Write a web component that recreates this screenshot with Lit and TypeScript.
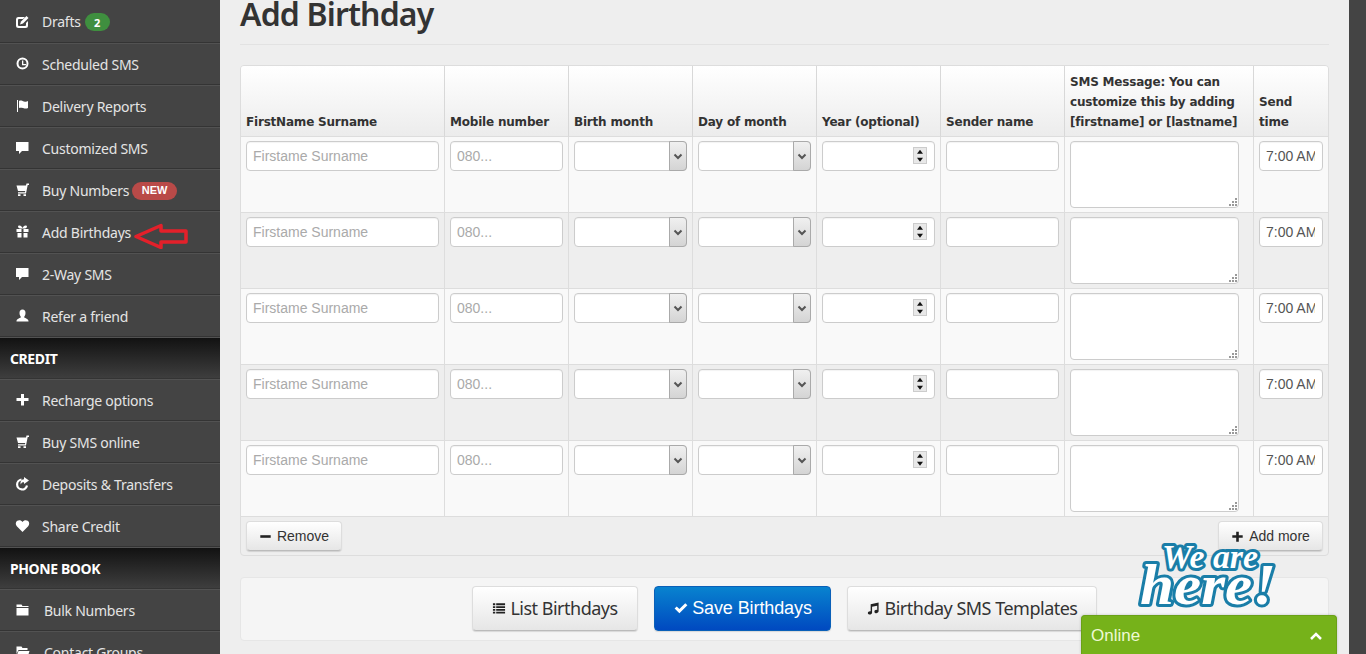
import { LitElement, html, css, svg } from "lit";
import { customElement } from "lit/decorators.js";

const ic: Record<string, unknown> = {
  edit: svg`<path d="M3 3h7l-2 2H4a1 1 0 0 0-1 1v5a1 1 0 0 0 1 1h6a1 1 0 0 0 1-1V9l2-2v4.500A2.500 2.500 0 0 1 10.500 14h-7A2.500 2.500 0 0 1 1 11.500v-6A2.500 2.500 0 0 1 3 3z"/><path d="M11.500 2l2 2L8 9.500l-3 1 1-3z"/>`,
  clock: svg`<path fill-rule="evenodd" d="M7.500 1.500a6 6 0 1 1 0 12 6 6 0 0 1 0-12zm0 2a4 4 0 1 0 0 8 4 4 0 0 0 0-8zM7 4.500h1.300V8H11v1.300H7z"/>`,
  flag: svg`<path d="M2 2h1v12H2zM4 3c2-1 3 0 5 .5s3 0 4-.5v7c-2 1-3 .5-5 0s-3-.5-4 0z"/>`,
  comment: svg`<path d="M1 2h12.500v9H7l-3 3v-3H1z"/>`,
  cart: svg`<path d="M1.500 3.500H11L11.500 1.500H14V3H12.700L11 11.500H3V10.200H10L10.200 9H3L1.500 3.500Z"/><path d="M3 12.300h2.500V14H3zM8.500 12.300H11V14H8.500z"/>`,
  gift: svg`<path fill-rule="evenodd" d="M1.500 5H6.500v3H1.500zM8.500 5H13.500v3H8.500zM2.500 9H6.500v4.500H2.500zM8.500 9H12.500v4.500H8.500zM3 2.500C3 1 5.500 1 6.500 2.500L7.500 4 8.500 2.500C9.500 1 12 1 12 2.500S10.500 4.500 9 4.500H6C4.500 4.500 3 4 3 2.500z"/>`,
  user: svg`<path d="M7.500 1.500c2 0 3 1.500 3 3.500S9.500 8.500 9 9c0 1 4.500 1.500 4.500 4v.5h-12V13c0-2.500 4.500-3 4.500-4-.5-.5-1.500-2-1.500-4s1-3.500 3-3.500z"/>`,
  plus: svg`<path d="M6 2h3v4h4.500v3H9v4.500H6V9H1.500V6H6z"/>`,
  share: svg`<path d="M12 9.500A5 5 0 1 1 6.500 3.500" fill="none" stroke="#fff" stroke-width="2.200"/><path d="M9 1l5 3.500L9 8V6.300C7.500 6.200 6.200 6.800 5.800 8.500 5 6 6 3.500 9 3.300z"/>`,
  heart: svg`<path d="M7.500 14L1.800 8.200C.3 6.500.5 4 2.300 2.800 4.200 1.600 6.300 2.300 7.500 4c1.200-1.700 3.300-2.400 5.200-1.200 1.800 1.200 2 3.700.5 5.400z"/>`,
  folder: svg`<path d="M1.500 2.500h5l1 1.500h6v1H1.500zM1.500 6h12v7.500h-12z"/>`,
  folderopen: svg`<path d="M1.500 2.500h5l1 1.500h5v2h-9L1.500 10zM3.500 7h11l-2 6.500H1z"/>`,
  list: svg`<path d="M1 2.500h2.500v2H1zM4.500 2.500H14v2H4.500zM1 5.500h2.500v2H1zM4.500 5.500H14v2H4.500zM1 8.500h2.500v2H1zM4.500 8.500H14v2H4.500zM1 11.500h2.500v2H1zM4.500 11.500H14v2H4.500z"/>`,
  check: svg`<path d="M1.500 8l2-2 2.500 2.500L11.500 3l2 2L6 12.500z"/>`,
  music: svg`<path d="M5 3.500L13.500 1.500v9.500c0 1.200-1.300 2-2.500 2s-2-.6-2-1.600 1-1.900 2.300-1.900l.7.100V5L6.500 6.200V12.500c0 1.200-1.300 2-2.500 2s-2-.6-2-1.600 1-1.900 2.300-1.900l.7.100z"/>`,
  minus: svg`<path d="M1.500 6h12v3h-12z"/>`,
};
const icon = (n: string) => html`<svg class="ico" viewBox="0 0 15 15" aria-hidden="true">${ic[n]}</svg>`;

const side: Array<{ t: string; i?: string; badge?: string; cls?: string; arrow?: boolean; wide?: boolean }> = [
  { t: "Drafts", i: "edit", badge: "2", cls: "green" },
  { t: "Scheduled SMS", i: "clock" },
  { t: "Delivery Reports", i: "flag" },
  { t: "Customized SMS", i: "comment" },
  { t: "Buy Numbers", i: "cart", badge: "NEW", cls: "red" },
  { t: "Add Birthdays", i: "gift", arrow: true },
  { t: "2-Way SMS", i: "comment" },
  { t: "Refer a friend", i: "user" },
  { t: "CREDIT" },
  { t: "Recharge options", i: "plus" },
  { t: "Buy SMS online", i: "cart" },
  { t: "Deposits & Transfers", i: "share" },
  { t: "Share Credit", i: "heart" },
  { t: "PHONE BOOK" },
  { t: "Bulk Numbers", i: "folder", wide: true },
  { t: "Contact Groups", i: "folderopen", wide: true },
];

const heads = [
  "FirstName Surname", "Mobile number", "Birth month", "Day of month", "Year (optional)", "Sender name",
  "SMS Message: You can customize this by adding [firstname] or [lastname]", "Send time",
];

@customElement("app-root")
export class AppRoot extends LitElement {
  static styles = css`
    :host { display: flex; width: 1366px; height: 654px; overflow: hidden; background: #444; font-family: "Liberation Sans", sans-serif; }
    .side { width: 220px; flex: none; background: #444; display: flex; flex-direction: column; }
    .row { height: 42px; flex: none; box-sizing: border-box; padding-top: 2px; border-bottom: 1px solid #343434; display: flex; align-items: center; color: #e4e4e4; font: 14px/1 "Noto Sans", sans-serif; letter-spacing: -0.25px; position: relative; box-shadow: inset 0 1px 0 #525252; }
    .row.first { height: 43px; box-shadow: none; }
    .row .ico { width: 15px; height: 15px; fill: #fff; margin: 0 12px 0 15px; flex: none; position: relative; top: -1px; }
    .row.wide .label { margin-left: 2px; }
    .head { background: linear-gradient(#111, #2a2a2a 55%, #3e3e3e); color: #fff; font-weight: 700; padding-left: 10px; letter-spacing: -0.4px; }
    .badge { display: inline-flex; align-items: center; justify-content: center; height: 18px; border-radius: 9px; color: #fff; font: 700 11px/1 "Noto Sans", sans-serif; letter-spacing: 0; }
    .badge.green { background: #3f8f3f; width: 25px; margin-left: 4px; }
    .badge.red { background: #b94a48; width: 45px; margin-left: 3px; font: 700 11px/1 "Liberation Sans", sans-serif; }
    .arrow { position: absolute; left: 134px; top: 12px; width: 54px; height: 26px; }
    .main { width: 1129px; flex: none; background: #eee; padding: 0 20px; box-sizing: border-box; }
    h1 { margin: 0 0 20px; height: 45px; box-sizing: border-box; border-bottom: 1px solid #e2e2e2; font: 600 32px/28px "Noto Sans", sans-serif; letter-spacing: -0.85px; color: #333; }
    .tbl { border: 1px solid #ddd; border-radius: 4px; overflow: hidden; height: 491px; box-sizing: border-box; }
    .grid { display: grid; grid-template-columns: 204px 124px 124px 124px 124px 124px 189px 1fr; }
    .th { height: 71px; box-sizing: border-box; padding: 5px 5px 4px; display: flex; align-items: flex-end; border-right: 1px solid #d8d8d8; border-bottom: 1px solid #ddd; background: linear-gradient(#fff, #ececec); font: 700 12px/20px "DejaVu Sans", sans-serif; color: #333; letter-spacing: -0.2px; }
    .th:nth-child(8) { border-right: 0; }
    .td { height: 76px; box-sizing: border-box; padding: 4px 5px; border-right: 1px solid #ddd; border-bottom: 1px solid #ddd; background: #f9f9f9; }
    .td.alt { background: #eee; }
    .td.last { border-right: 0; }
    .inp { display: block; width: 100%; height: 30px; box-sizing: border-box; margin: 0; padding: 0 7px 0 6px; border: 1px solid #ccc; border-radius: 4px; background: #fff; font: 14px "Liberation Sans", sans-serif; color: #555; outline: none; box-shadow: inset 0 1px 1px rgba(0,0,0,.05); }
    .inp::placeholder { color: #aaa; opacity: 1; }
    .sel { position: relative; display: block; height: 30px; }
    .sel .btn { position: absolute; right: 0; top: 0; width: 18px; height: 30px; box-sizing: border-box; border: 1px solid #aaa; border-radius: 0 4px 4px 0; background: linear-gradient(#f0f0f0, #d4d4d4); display: flex; align-items: center; justify-content: center; }
    .num { position: relative; display: block; height: 30px; }
    .spin { position: absolute; right: 8px; top: 6px; width: 14px; height: 17px; background: #e8e8e8; border: 1px solid #ccc; box-sizing: border-box; display: flex; flex-direction: column; }
    .spin svg { flex: 1; width: 100%; min-height: 0; }
    .ta { height: 67px; width: 169px; display: block; position: relative; resize: none; }
    .grip { position: absolute; right: 2px; bottom: 2px; width: 8px; height: 8px; }
    .foot { display: flex; justify-content: space-between; padding: 4px 5px; height: 38px; box-sizing: border-box; }
    .bt { display: inline-flex; align-items: center; justify-content: center; box-sizing: border-box; border: 1px solid #ddd; border-bottom-color: #bbb; border-radius: 4px; background: linear-gradient(#fff, #e6e6e6); color: #333; box-shadow: 0 1px 1px rgba(0,0,0,.12); }
    .bt .ico { fill: #222; flex: none; }
    .small { height: 30px; font: 14px "Liberation Sans", sans-serif; }
    .small .ico { width: 13px; height: 13px; margin-right: 5px; }
    .panel { margin-top: 21px; height: 64px; box-sizing: border-box; border: 1px solid #e6e6e6; border-radius: 4px; background: #f5f5f5; display: flex; justify-content: center; gap: 16px; padding: 8px 0 0; }
    .large { height: 45px; padding-bottom: 2px; font: 18px "Noto Sans", sans-serif; letter-spacing: -0.5px; }
    .large .ico { width: 14px; height: 14px; margin-right: 4px; }
    .primary { background: linear-gradient(#0883cf, #0049c0); border: 1px solid #0a60b8; color: #fff; font: 18px "Liberation Sans", sans-serif; letter-spacing: -0.1px; }
    .primary .ico { fill: #fff; width: 16px; height: 16px; margin-right: 3px; }
    .right { width: 17px; flex: none; background: #444; }
    .logo { position: absolute; left: 1136px; top: 530px; width: 146px; height: 84px; }
    .logo text { font-family: "Liberation Serif", serif; font-weight: 700; font-style: italic; fill: #fff; stroke: #1a7ea8; stroke-width: 6px; paint-order: stroke; stroke-linejoin: round; }
    .chat { position: absolute; left: 1081px; top: 615px; width: 256px; height: 39px; box-sizing: border-box; background: #76b21a; border-radius: 4px 4px 0 0; border: 1px solid #6aa116; border-bottom: 0; display: flex; align-items: center; justify-content: space-between; padding: 1px 13px 0 9px; color: #eef9d4; font: 17px "Liberation Sans", sans-serif; box-shadow: 0 0 3px rgba(0,0,0,.2); }
    .chat svg { width: 14px; height: 10px; }
  `;

  private cell(c: number, r: number) {
    const alt = r % 2 === 1;
    const cls = `td ${alt ? "alt" : ""} ${c === 7 ? "last" : ""}`;
    let inner: unknown;
    if (c === 0) inner = html`<input class="inp" placeholder="Firstame Surname" />`;
    else if (c === 1) inner = html`<input class="inp" placeholder="080..." />`;
    else if (c === 2 || c === 3)
      inner = html`<div class="sel"><input class="inp" /><span class="btn"><svg width="10" height="7" viewBox="0 0 10 7"><path d="M1.500 1.500L5 5l3.500-3.500" fill="none" stroke="#555" stroke-width="2"/></svg></span></div>`;
    else if (c === 4)
      inner = html`<div class="num"><input class="inp" /><span class="spin"><svg viewBox="0 0 12 7"><path d="M6 1.500L9 5.500H3z" fill="#111"/></svg><svg viewBox="0 0 12 7"><path d="M3 1.500h6L6 5.500z" fill="#111"/></svg></span></div>`;
    else if (c === 5) inner = html`<input class="inp" />`;
    else if (c === 6)
      inner = html`<div class="ta"><textarea class="inp ta"></textarea><svg class="grip" viewBox="0 0 8 8" fill="#999"><path d="M6 0h2v2H6zM3 3h2v2H3zM6 3h2v2H6zM0 6h2v2H0zM3 6h2v2H3zM6 6h2v2H6z"/></svg></div>`;
    else inner = html`<input class="inp" value="7:00 AM" />`;
    return html`<div class=${cls}>${inner}</div>`;
  }

  render() {
    return html`
      <nav class="side">
        ${side.map((s, idx) => s.i
          ? html`<div class="row ${idx === 0 ? "first" : ""} ${s.wide ? "wide" : ""}">
              ${icon(s.i)}<span class="label">${s.t}</span>
              ${s.badge ? html`<span class="badge ${s.cls}">${s.badge}</span>` : ""}
              ${s.arrow ? html`<svg class="arrow" viewBox="0 0 54 26"><path d="M2 13.500L27 2.500V8H52V19H27V24.500z" fill="none" stroke="#e3202a" stroke-width="3.500" stroke-linejoin="round"/></svg>` : ""}
            </div>`
          : html`<div class="row head">${s.t}</div>`)}
      </nav>
      <main class="main">
        <h1>Add Birthday</h1>
        <section class="tbl">
          <div class="grid">
            ${heads.map((h) => html`<div class="th"><span>${h}</span></div>`)}
            ${[0, 1, 2, 3, 4].map((r) => [0, 1, 2, 3, 4, 5, 6, 7].map((c) => this.cell(c, r)))}
          </div>
          <div class="foot">
            <button class="bt small" style="width:96px">${icon("minus")}Remove</button>
            <button class="bt small" style="width:105px">${icon("plus")}Add more</button>
          </div>
        </section>
        <section class="panel">
          <button class="bt large" style="width:166px">${icon("list")}List Birthdays</button>
          <button class="bt large primary" style="width:177px">${icon("check")}Save Birthdays</button>
          <button class="bt large" style="width:250px">${icon("music")}Birthday SMS Templates</button>
        </section>
      </main>
      <div class="right"></div>
      <svg class="logo" viewBox="0 0 146 84" role="img">
        <text x="26" y="38" font-size="34" textLength="96" lengthAdjust="spacingAndGlyphs">We are</text>
        <text x="4" y="74" font-size="58" textLength="136" lengthAdjust="spacingAndGlyphs">here!</text>
      </svg>
      <div class="chat"><span>Online</span><svg viewBox="0 0 14 10"><path d="M2 8l5-5 5 5" fill="none" stroke="#fff" stroke-width="2.500"/></svg></div>
    `;
  }
}
